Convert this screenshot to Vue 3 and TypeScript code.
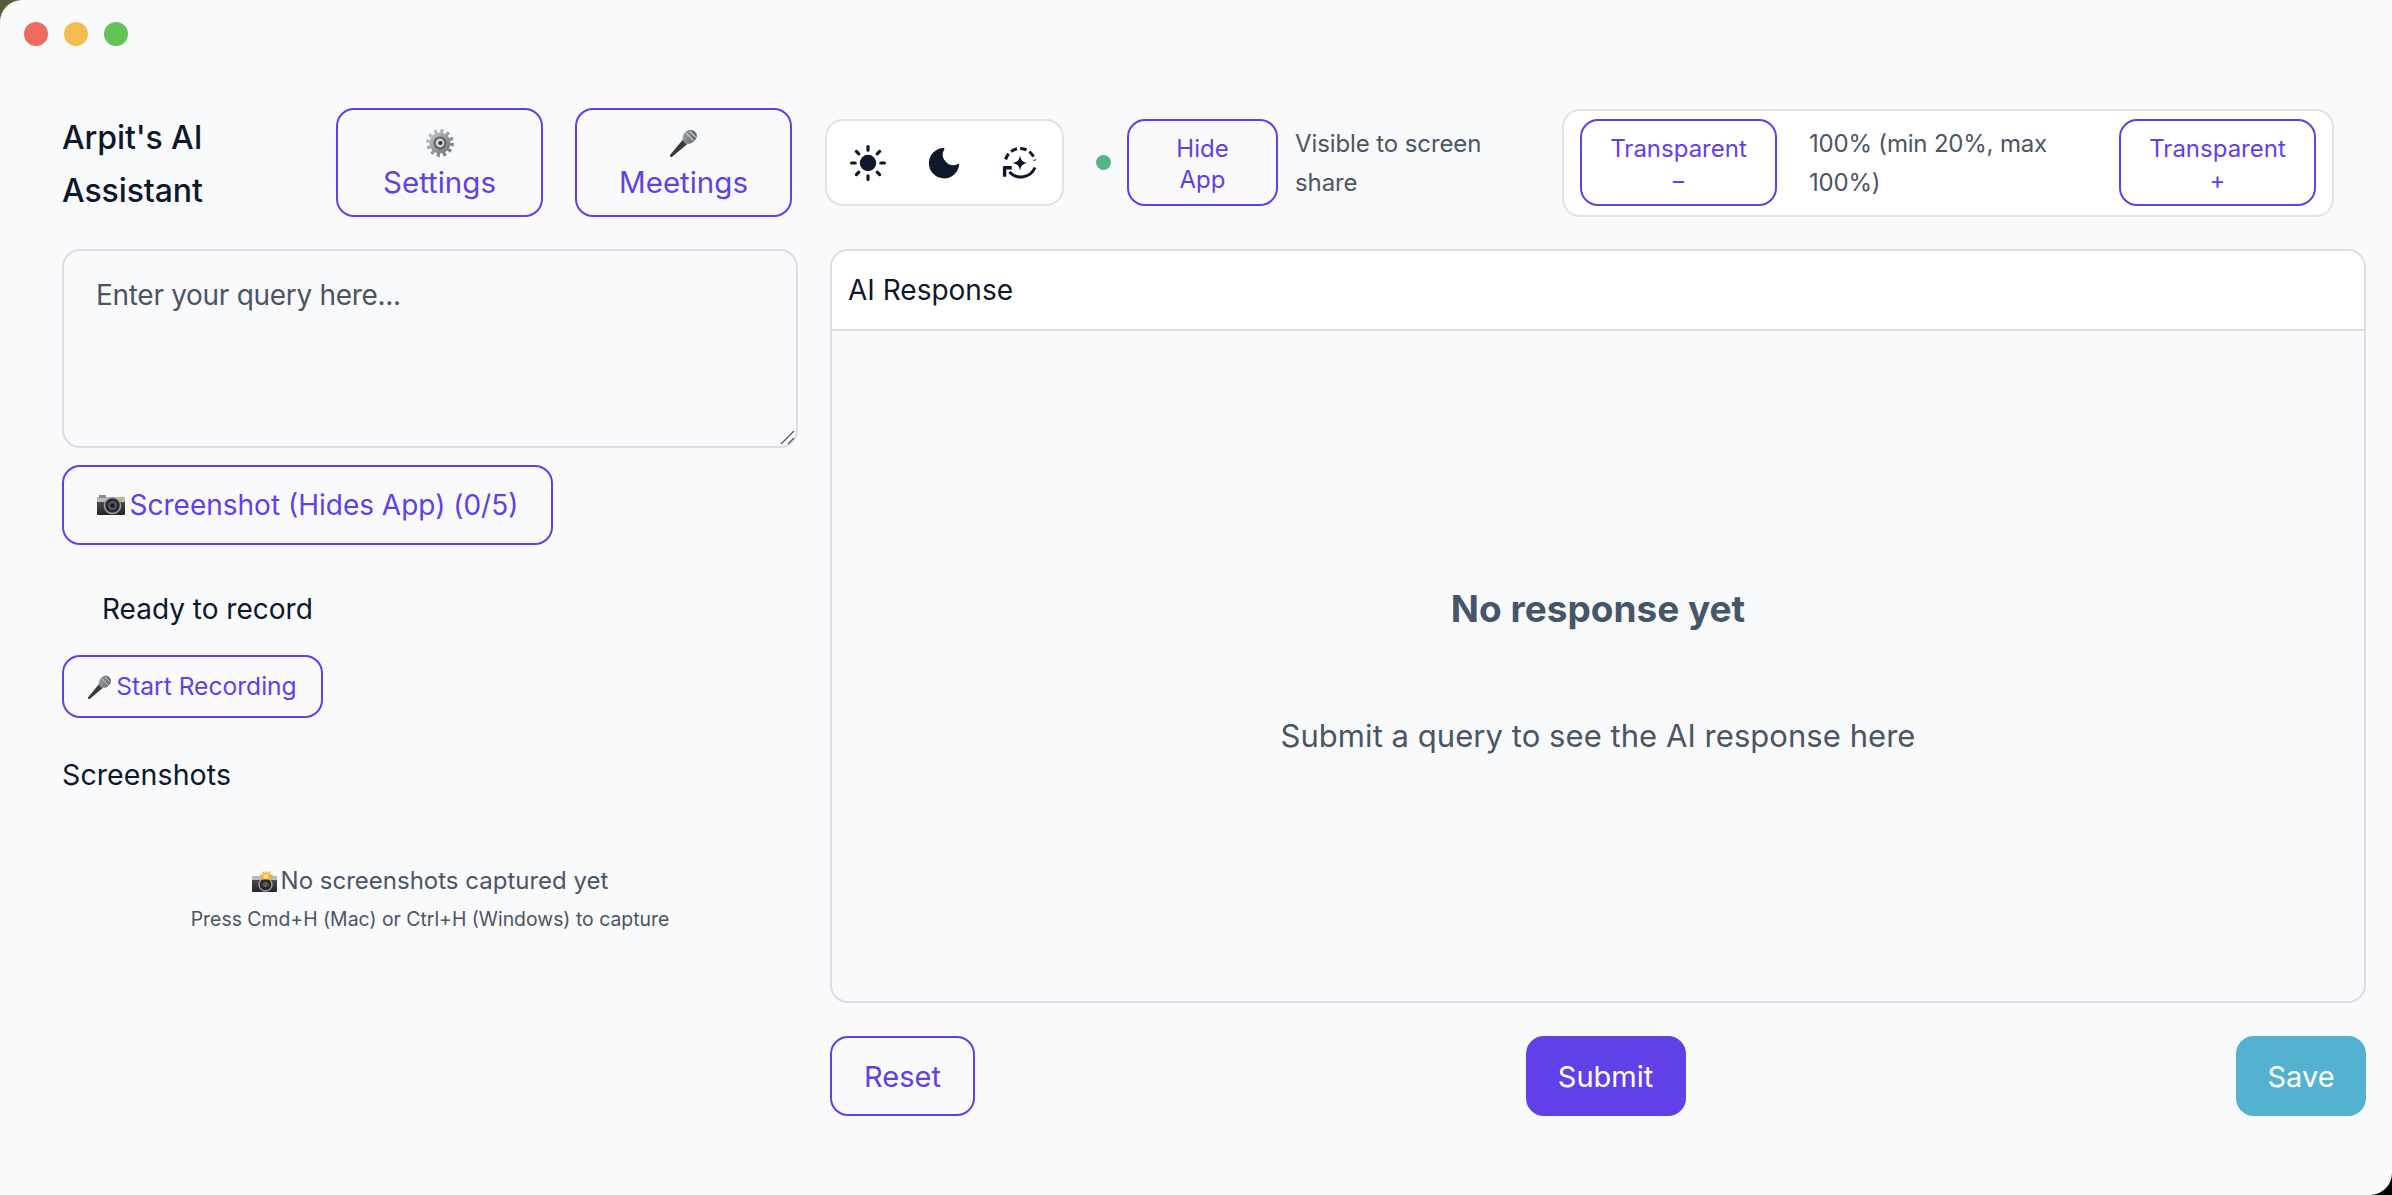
<script setup lang="ts">
const lights: string[] = ['#ee6a5f', '#f5bd4f', '#61c454']
</script>

<template>
  <div class="window">
    <div class="titlebar">
      <span v-for="c in lights" :key="c" class="light" :style="{ background: c }"></span>
    </div>
    <div class="content">
      <header class="topbar">
        <h1 class="title">Arpit's AI<br />Assistant</h1>
        <button class="btn stack settings">
          <svg class="emoji" viewBox="0 0 28 28" width="28" height="28">
            <defs>
              <linearGradient id="gearG" x1="0" y1="0" x2="1" y2="1"><stop offset="0" stop-color="#c2c6ca"/><stop offset="1" stop-color="#6f747a"/></linearGradient>
              <linearGradient id="micG" x1="0" y1="0" x2="1" y2="1"><stop offset="0" stop-color="#a7aaad"/><stop offset="1" stop-color="#55585b"/></linearGradient>
            </defs>
            <circle cx="14" cy="14" r="11.6" fill="none" stroke="url(#gearG)" stroke-width="4.6" stroke-dasharray="3 3.07"/>
            <circle cx="14" cy="14" r="10.6" fill="url(#gearG)"/>
            <circle cx="14" cy="14" r="6.4" fill="#5c6065"/>
            <circle cx="14" cy="14" r="4.4" fill="#d5d7d9"/>
            <circle cx="14.4" cy="14" r="2.1" fill="#34373a"/>
          </svg>
          <span>Settings</span>
        </button>
        <button class="btn stack meetings">
          <svg class="emoji" viewBox="0 0 28 28" width="28" height="28">
            <path d="M.4 25.6 13 10.6l4.4 4.4-15 12.6a1.4 1.4 0 0 1-2-2Z" fill="#38393b"/>
            <rect x="12.2" y="1.6" width="15" height="12.4" rx="6.2" transform="rotate(-45 19.7 7.8)" fill="url(#micG)"/>
            <path d="M16.4 4.4l7.2 7.2M19.6 2.2l6.2 6.2" stroke="#d4d6d8" stroke-width="1.1"/>
            <path d="M12.6 11l4.4 4.4" stroke="#77797c" stroke-width="1.6"/>
          </svg>
          <span>Meetings</span>
        </button>
        <div class="themes">
          <svg viewBox="0 0 36 36" width="36" height="36" fill="#0f172a">
            <circle cx="18" cy="18" r="8.2"/>
            <g stroke="#0f172a" stroke-width="3.2" stroke-linecap="round">
              <path d="M18 1.6v3.6M18 30.8v3.6M1.6 18h3.6M30.8 18h3.6M6.4 6.4l2.4 2.4M27.2 27.2l2.4 2.4M6.4 29.6l2.4-2.4M27.2 8.8l2.4-2.4"/>
            </g>
          </svg>
          <svg viewBox="0 0 36 36" width="36" height="36" fill="#0f172a">
            <path d="M17.6 3A15.2 15.2 0 1 0 33.2 19.6c.1-.7-.6-1-1.1-.6A10.6 10.6 0 0 1 18.3 4.2c.4-.6 0-1.3-.7-1.2Z"/>
          </svg>
          <svg viewBox="0 0 36 36" width="36" height="36" fill="none" stroke="#0f172a" stroke-width="3">
            <path d="M3.6 14.5A15 15 0 0 1 32.8 15.5" stroke-dasharray="6.6 3.2"/>
            <path d="M33 22.500A15.500 15.500 0 0 1 7.400 27"/>
            <path d="M1.2 22.800h8.600M2.600 22v9.800" stroke-width="3.4"/>
            <path d="M18 10.2c.8 5 2.800 7 7.600 7.800-4.800.8-6.800 2.800-7.600 7.800-.8-5-2.800-7-7.600-7.800 4.800-.8 6.800-2.800 7.600-7.800Z" fill="#0f172a" stroke="none"/>
          </svg>
        </div>
        <span class="dot"></span>
        <button class="btn hide">Hide<br />App</button>
        <p class="visible">Visible to screen share</p>
        <div class="opacity">
          <button class="btn trans">Transparent<br />−</button>
          <p class="pct">100% (min 20%, max 100%)</p>
          <button class="btn trans">Transparent<br />+</button>
        </div>
      </header>

      <main class="main">
        <section class="left">
          <div class="query-wrap">
            <textarea class="query" placeholder="Enter your query here..."></textarea>
            <svg class="grip" viewBox="0 0 16 16" width="16" height="16" fill="none" stroke="#55585c" stroke-width="1.3">
              <path d="M2 15 15 2M9 15l6-6"/>
            </svg>
          </div>
          <button class="btn shot">
            <svg class="emoji" viewBox="0 0 28 20" width="28" height="20">
              <defs><linearGradient id="camB" x1="0" y1="0" x2="0" y2="1"><stop offset="0" stop-color="#55575a"/><stop offset="1" stop-color="#242527"/></linearGradient></defs>
              <rect x="0" y="2" width="28" height="18" rx="1" fill="url(#camB)"/>
              <rect x="0" y="2" width="28" height="5" rx="1" fill="#b9bbbd"/>
              <rect x="2" y="0" width="7" height="3" fill="#8c8e91"/>
              <rect x="22" y="3" width="4" height="3" fill="#d7b04a"/>
              <circle cx="15.5" cy="10.5" r="8" fill="#2a2b2e" stroke="#a4a6a9" stroke-width="1.4"/>
              <circle cx="15.5" cy="10.5" r="4.5" fill="#55585e"/>
              <circle cx="15.5" cy="10.5" r="2.2" fill="#191a1c"/>
            </svg><span>Screenshot (Hides App) (0/5)</span>
          </button>
          <p class="status">Ready to record</p>
          <button class="btn rec">
            <svg class="emoji" viewBox="0 0 28 28" width="24" height="24">
              <path d="M.4 25.6 13 10.6l4.4 4.4-15 12.6a1.4 1.4 0 0 1-2-2Z" fill="#38393b"/>
              <rect x="12.2" y="1.6" width="15" height="12.4" rx="6.2" transform="rotate(-45 19.7 7.8)" fill="url(#micG)"/>
              <path d="M16.4 4.4l7.2 7.2M19.6 2.2l6.2 6.2" stroke="#d4d6d8" stroke-width="1.1"/>
              <path d="M12.6 11l4.4 4.4" stroke="#77797c" stroke-width="1.6"/>
            </svg><span>Start Recording</span>
          </button>
          <h2 class="shots">Screenshots</h2>
          <div class="empty">
            <p class="empty-main">
              <svg class="emoji" viewBox="0 0 26 22" width="26" height="22">
                <rect x="0" y="6" width="25" height="16" rx="1" fill="url(#camB)"/>
                <rect x="0" y="6" width="25" height="4" fill="#b9bbbd"/>
                <circle cx="13.5" cy="14.5" r="6.5" fill="#2a2b2e" stroke="#a4a6a9" stroke-width="1.3"/>
                <circle cx="13.5" cy="14.5" r="2.8" fill="#55585e"/>
                <path d="M14 0l1.3 3.4L18.5 1l-.9 3.7 3.9-.4-2.7 2.9 1.5 2.3h-12l1.5-2.3L7.100 4.300l3.900.4L10.100 1l3.200 2.400Z" fill="#f3a93a"/>
                <circle cx="14" cy="6.500" r="2.600" fill="#ffe27a"/>
              </svg><span>No screenshots captured yet</span>
            </p>
            <p class="empty-sub">Press Cmd+H (Mac) or Ctrl+H (Windows) to capture</p>
          </div>
        </section>

        <section class="right">
          <div class="panel">
            <div class="panel-head">AI Response</div>
            <div class="panel-body">
              <h3 class="none">No response yet</h3>
              <p class="hint">Submit a query to see the AI response here</p>
            </div>
          </div>
          <div class="actions">
            <button class="btn act reset">Reset</button>
            <button class="btn act submit">Submit</button>
            <button class="btn act save">Save</button>
          </div>
        </section>
      </main>
    </div>
  </div>
</template>

<style>
html, body { margin: 0; background: linear-gradient(135deg, #5a5c3c 50%, #000 50%); }
</style>

<style scoped>
.window {
  width: 2392px;
  height: 1195px;
  box-sizing: border-box;
  background: #f9fafc;
  border-radius: 22px 0 22px 0;
  overflow: hidden;
  font-family: Inter, "Noto Sans", sans-serif;
  color: #0f172a;
}
p, h1, h2, h3 { margin: 0; font-weight: 400; }
.titlebar { height: 108px; box-sizing: border-box; padding: 22px 0 0 24px; display: flex; gap: 16px; align-items: flex-start; }
.light { width: 24px; height: 24px; border-radius: 50%; }
.content { padding: 0 26px 0 62px; }
.topbar { display: flex; align-items: center; height: 109px; }
.title { width: 274px; font-size: 32px; line-height: 53px; font-weight: 500; letter-spacing: -0.1px; padding-top: 3px; }
.btn {
  box-sizing: border-box;
  background: transparent;
  border: 2px solid #6240e8;
  border-radius: 18px;
  color: #6240e8;
  font-family: inherit;
  font-size: 27px;
  padding: 0;
  cursor: pointer;
  line-height: 1.3;
}
.emoji { vertical-align: middle; flex: none; }
.stack { height: 109px; display: flex; flex-direction: column; align-items: center; justify-content: center; gap: 7px; font-size: 29.5px; line-height: 36px; padding-top: 4px; }
.settings { width: 207px; }
.meetings { width: 217px; margin-left: 32px; }
.themes {
  box-sizing: border-box;
  width: 239px; height: 87px; margin-left: 33px; padding-right: 2px;
  background: #fff; border: 2px solid #e2e3e6; border-radius: 18px;
  display: flex; align-items: center; justify-content: center; gap: 40px;
}
.dot { width: 15px; height: 15px; border-radius: 50%; background: #56b386; margin-left: 32px; }
.hide { width: 151px; height: 87px; margin-left: 16px; font-size: 24px; line-height: 31px; padding-top: 3px; }
.visible { width: 250px; margin-left: 17px; font-size: 24px; line-height: 39px; color: #4b5563; letter-spacing: -0.1px; }
.opacity {
  box-sizing: border-box;
  width: 772px; height: 108px; margin-left: 17px; padding: 0 16px;
  background: #fff; border: 2px solid #e2e3e6; border-radius: 18px;
  display: flex; align-items: center; gap: 32px;
}
.trans { width: 197px; height: 87px; font-size: 24px; line-height: 32px; flex: none; padding-top: 4px; }
.trans:last-child { margin-left: auto; }
.pct { width: 290px; margin-right: -32px; font-size: 24px; line-height: 39px; color: #4b5563; letter-spacing: -0.2px; }
.main { display: grid; grid-template-columns: 736px 1536px; column-gap: 32px; margin-top: 32px; height: 867px; }
.left { display: flex; flex-direction: column; align-items: flex-start; }
.query-wrap { position: relative; width: 100%; height: 199px; }
.query {
  box-sizing: border-box; width: 100%; height: 199px; padding: 26px 32px;
  background: #f9fafc; border: 2px solid #dcdee2; border-radius: 18px;
  font-family: inherit; font-size: 28px; line-height: 36px; letter-spacing: -0.3px; outline: none; display: block; resize: none;
}
.query::placeholder { color: #4b5563; opacity: 1; }
.grip { position: absolute; right: 3px; bottom: 3px; }
.shot { width: 491px; height: 80px; margin-top: 17px; font-size: 28px; display: flex; align-items: center; justify-content: center; gap: 5px; }
.status { margin: 46px 0 0 40px; font-size: 28px; line-height: 36px; }
.rec { width: 261px; height: 63px; margin-top: 28px; font-size: 24.6px; display: flex; align-items: center; justify-content: center; gap: 4px; }
.shots { margin-top: 39px; font-size: 28.5px; line-height: 36px; font-weight: 400; letter-spacing: 0.1px; }
.empty { width: 100%; margin-top: 70px; text-align: center; }
.empty-main { font-size: 24px; line-height: 36px; color: #4b5563; display: flex; align-items: center; justify-content: center; gap: 3px; }
.empty-sub { font-size: 19.4px; line-height: 30px; margin-top: 5px; color: #4b5563; }
.right { display: flex; flex-direction: column; justify-content: space-between; }
.panel {
  box-sizing: border-box; height: 754px;
  border: 2px solid #dcdee2; border-radius: 18px; overflow: hidden;
  display: flex; flex-direction: column;
}
.panel-head { height: 78px; background: #fff; border-bottom: 2px solid #dcdee2; padding: 0 16px; display: flex; align-items: center; font-size: 28px; flex: none; }
.panel-body { flex: 1; display: flex; flex-direction: column; align-items: center; padding-top: 254px; }
.none { font-size: 37px; font-weight: 700; line-height: 48px; color: #475569; }
.hint { font-size: 31px; line-height: 40px; margin-top: 83px; color: #4b5563; letter-spacing: 0.05px; }
.actions { display: flex; justify-content: space-between; height: 80px; }
.act { height: 80px; font-size: 29px; padding-top: 2px; }
.reset { width: 145px; }
.submit { width: 160px; background: #6240e8; color: #fff; }
.save { width: 130px; background: #52b2d0; border-color: #52b2d0; color: #fff; }
</style>
